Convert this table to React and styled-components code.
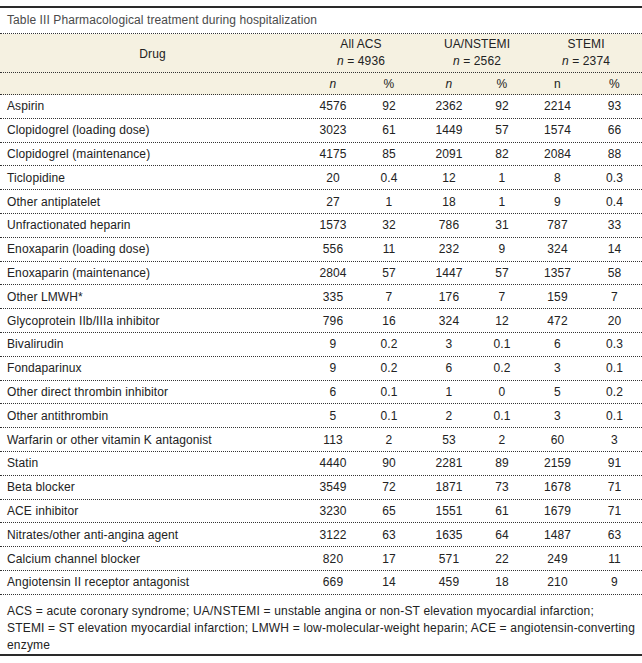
import React from 'react'
import styled, { createGlobalStyle } from 'styled-components'

const GlobalStyle = createGlobalStyle`
    body {
        margin: 0;
        background: #fff;
        font-family: "Liberation Sans", Arial, sans-serif;
        font-size: 12px;
        letter-spacing: 0.1px;
        color: #222;
    }
`

const rows = [
    ['Aspirin', '4576', '92', '2362', '92', '2214', '93'],
    ['Clopidogrel (loading dose)', '3023', '61', '1449', '57', '1574', '66'],
    ['Clopidogrel (maintenance)', '4175', '85', '2091', '82', '2084', '88'],
    ['Ticlopidine', '20', '0.4', '12', '1', '8', '0.3'],
    ['Other antiplatelet', '27', '1', '18', '1', '9', '0.4'],
    ['Unfractionated heparin', '1573', '32', '786', '31', '787', '33'],
    ['Enoxaparin (loading dose)', '556', '11', '232', '9', '324', '14'],
    ['Enoxaparin (maintenance)', '2804', '57', '1447', '57', '1357', '58'],
    ['Other LMWH*', '335', '7', '176', '7', '159', '7'],
    ['Glycoprotein IIb/IIIa inhibitor', '796', '16', '324', '12', '472', '20'],
    ['Bivalirudin', '9', '0.2', '3', '0.1', '6', '0.3'],
    ['Fondaparinux', '9', '0.2', '6', '0.2', '3', '0.1'],
    ['Other direct thrombin inhibitor', '6', '0.1', '1', '0', '5', '0.2'],
    ['Other antithrombin', '5', '0.1', '2', '0.1', '3', '0.1'],
    ['Warfarin or other vitamin K antagonist', '113', '2', '53', '2', '60', '3'],
    ['Statin', '4440', '90', '2281', '89', '2159', '91'],
    ['Beta blocker', '3549', '72', '1871', '73', '1678', '71'],
    ['ACE inhibitor', '3230', '65', '1551', '61', '1679', '71'],
    ['Nitrates/other anti-angina agent', '3122', '63', '1635', '64', '1487', '63'],
    ['Calcium channel blocker', '820', '17', '571', '22', '249', '11'],
    ['Angiotensin II receptor antagonist', '669', '14', '459', '18', '210', '9'],
]

const groups = [
    { name: 'All ACS', total: '4936' },
    { name: 'UA/NSTEMI', total: '2562' },
    { name: 'STEMI', total: '2374' },
]

// the source breaks the footnote at these points
const notes = [
    'ACS = acute coronary syndrome; UA/NSTEMI = unstable angina or non-ST elevation myocardial infarction;',
    'STEMI = ST elevation myocardial infarction; LMWH = low-molecular-weight heparin; ACE = angiotensin-converting',
    'enzyme',
]

function App() {
    return (
        <>
            <GlobalStyle />
            <Wrapper>
                <Title>Table III Pharmacological treatment during hospitalization</Title>

                <GroupRow>
                    <DrugHead>Drug</DrugHead>
                    {groups.map((g) => (
                        <GroupHead key={g.name}>
                            <span>{g.name}</span>
                            <span><i>n</i> = {g.total}</span>
                        </GroupHead>
                    ))}
                </GroupRow>

                <SubRow>
                    <span />
                    <Cell><i>n</i></Cell>
                    <Cell>%</Cell>
                    <Cell><i>n</i></Cell>
                    <Cell>%</Cell>
                    <Cell>n</Cell>
                    <Cell>%</Cell>
                </SubRow>

                {rows.map(([drug, ...vals]) => (
                    <Row key={drug}>
                        <Name>{drug}</Name>
                        {vals.map((v, i) => (
                            <Cell key={i}>{v}</Cell>
                        ))}
                    </Row>
                ))}

                <Footnote>
                    {notes.map((line) => (
                        <NoteLine key={line}>{line}</NoteLine>
                    ))}
                </Footnote>
            </Wrapper>
        </>
    )
}

export default App

const columns = '305px 56px 56px 64px 42px 69px 45px'

const Wrapper = styled.div`
    width: 642px;
    margin-top: 6px;
    border-top: 2px solid #2a2a2a;
    border-bottom: 2px solid #2a2a2a;
`

const Title = styled.div`
    height: 25px;
    line-height: 25px;
    padding-left: 7px;
    color: #4a4a4a;
    border-bottom: 1px dotted #333;
`

const GroupRow = styled.div`
    display: grid;
    grid-template-columns: 305px 112px 120px 98px;
    height: 38px;
    background: #f5f1e1;
    border-bottom: 1px dotted #333;
`

const DrugHead = styled.div`
    display: flex;
    align-items: center;
    justify-content: center;
    padding-top: 1px;
`

const GroupHead = styled.div`
    display: flex;
    flex-direction: column;
    align-items: center;
    justify-content: center;
    line-height: 17px;
`

const SubRow = styled.div`
    display: grid;
    grid-template-columns: ${columns};
    align-items: center;
    height: 21px;
    background: #f5f1e1;
    border-bottom: 1px dotted #333;
`

const Row = styled.div`
    display: grid;
    grid-template-columns: ${columns};
    align-items: center;
    height: 23.8px;
    box-sizing: border-box;
    border-bottom: 1px dotted #333;
`

const Name = styled.div`
    padding-left: 7px;
    white-space: nowrap;
`

const Cell = styled.div`
    text-align: center;
`

const Footnote = styled.div`
    padding: 8px 6px 0 7px;
    letter-spacing: 0.18px;
`

const NoteLine = styled.div`
    line-height: 17.2px;
    white-space: nowrap;
`
